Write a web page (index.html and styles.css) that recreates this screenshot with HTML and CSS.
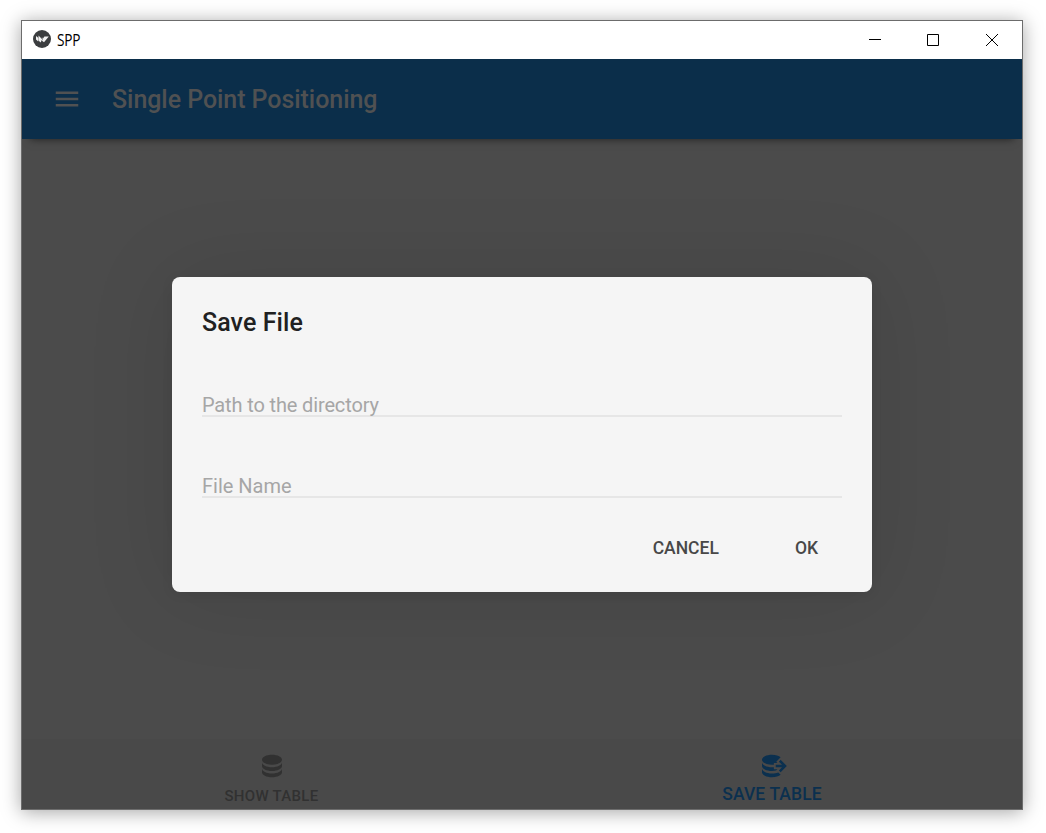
FILE: index.html
```html
<!DOCTYPE html>
<html lang="en">
<head>
<meta charset="utf-8">
<title>SPP</title>
<link rel="stylesheet" href="styles.css">
</head>
<body>
<div class="window">
  <header class="titlebar">
    <svg class="logo" viewBox="0 0 18 18"><circle cx="9" cy="9" r="9" fill="#3b3d3f"/><path d="M3 6L5.2 7.8V11.6L3 9.6ZM5.5 5.6L9.2 9.2L7.6 12.4L5.5 10.6ZM8.6 7L10 8.4L11.4 6.6H15.8L11 12.2L9 10.8L9.7 9Z" fill="#f2f2f2"/></svg>
    <span class="caption">SPP</span>
    <div class="controls">
      <svg viewBox="0 0 12 12"><path d="M0 5.5H12" /></svg>
      <svg viewBox="0 0 12 12"><path d="M.5 .5H11.5V11.5H.5Z"/></svg>
      <svg viewBox="0 0 12 12"><path d="M0 0L12 12M12 0L0 12"/></svg>
    </div>
  </header>
  <div class="toolbar">
    <svg class="icon" viewBox="0 0 24 24"><path d="M3,6H21V8H3V6M3,11H21V13H3V11M3,16H21V18H3V16Z"/></svg>
    <h1 class="heading">Single Point Positioning</h1>
  </div>
  <main class="content">
    <section class="dialog">
      <h2 class="dialog-title">Save File</h2>
      <div class="field path">Path to the directory</div>
      <div class="field">File Name</div>
      <div class="actions"><span class="cancel">CANCEL</span><span class="ok">OK</span></div>
    </section>
  </main>
  <nav class="tabs">
    <div class="tab">
      <svg class="icon" viewBox="0 0 24 24"><path d="M12,3C7.58,3 4,4.79 4,7C4,9.21 7.58,11 12,11C16.42,11 20,9.21 20,7C20,4.79 16.42,3 12,3M4,9V12C4,14.21 7.58,16 12,16C16.42,16 20,14.21 20,12V9C20,11.21 16.42,13 12,13C7.58,13 4,11.21 4,9M4,14V17C4,19.21 7.58,21 12,21C16.42,21 20,19.21 20,17V14C20,16.21 16.42,18 12,18C7.58,18 4,16.21 4,14Z"/></svg>
      <span class="label">SHOW TABLE</span>
    </div>
    <div class="tab active">
      <svg class="icon" viewBox="0 0 24 24"><path d="M12,3C7.58,3 4,4.79 4,7C4,9.21 7.58,11 12,11C12.5,11 13,10.97 13.5,10.92V9.5H16.39L15.39,8.5L18.9,5C17.5,3.8 14.94,3 12,3M18.92,7.08L17.5,8.5L20,11H15V13H20L17.5,15.5L18.92,16.92L23.84,12M4,9V12C4,14.21 7.58,16 12,16C13.17,16 14.26,15.85 15.25,15.63L16.38,14.5H13.5V12.92C13,12.97 12.5,13 12,13C7.58,13 4,11.21 4,9M4,14V17C4,19.21 7.58,21 12,21C14.94,21 17.5,20.2 18.9,19L17,17.1C15.61,17.66 13.9,18 12,18C7.58,18 4,16.21 4,14Z"/></svg>
      <span class="label">SAVE TABLE</span>
    </div>
  </nav>
</div>
</body>
</html>
```
FILE: styles.css
```css
* { box-sizing: border-box; margin: 0; }
body {
  padding: 20px 23px 23px 21px;
  height: 833px;
  background: #fff;
  font-family: Roboto, sans-serif;
  overflow: hidden;
}
svg { display: block; }
.window {
  display: flex;
  flex-direction: column;
  width: 1002px;
  height: 790px;
  border: 1px solid #6c6c6c;
  background: #4b4b4b;
  box-shadow: 0 2px 18px rgba(0, 0, 0, .36);
}
.titlebar {
  display: flex;
  align-items: center;
  height: 38px;
  padding: 0 24px 0 11px;
  background: #fff;
}
.logo { width: 18px; height: 18px; margin-top: -2px; }
.caption {
  margin: 0 0 0 6px;
  font: 15.5px/20px "Open Sans", sans-serif;
  letter-spacing: -.3px;
  transform: scaleX(.88);
  transform-origin: left;
  color: #000;
}
.controls { display: flex; gap: 46px; margin-left: auto; }
.controls svg { width: 12px; height: 12px; fill: none; stroke: #000; stroke-width: 1; }
.controls svg:nth-child(-n+2) { margin-left: -1px; margin-right: 1px; }
.controls svg:nth-child(2) { margin-left: 0; }
.controls svg:first-child { margin-right: 0; }
.toolbar {
  display: flex;
  align-items: center;
  height: 80px;
  padding-left: 30px;
  background: #0b2e4a;
  color: #505152;
  box-shadow: 0 8px 8px -8px rgba(0, 0, 0, .6);
}
.icon { width: 30px; height: 30px; fill: currentColor; }
.heading { margin-left: 30px; font-size: 25px; font-weight: 500; letter-spacing: -.06px; }
.content { flex: 1; padding: 137.5px 150px 0; }
.dialog {
  height: 315px;
  padding: 30px 30px 0;
  border-radius: 8px;
  background: #f5f5f5;
  box-shadow: 0 0 90px rgba(0, 0, 0, .1), 0 2px 12px rgba(0, 0, 0, .08);
}
.dialog-title { height: 30px; font-size: 25px; line-height: 32px; font-weight: 500; letter-spacing: .08px; color: #212121; }
.field {
  height: 26px;
  margin-top: 55px;
  border-bottom: 2px solid #e6e6e6;
  font-size: 20px;
  line-height: 28px;
  color: #a6a6a6;
}
.path { margin-top: 54px; letter-spacing: -.14px; }
.actions {
  display: flex;
  justify-content: flex-end;
  gap: 76px;
  margin-top: 39px;
  padding-right: 24px;
  font-size: 17.5px;
  line-height: 22px;
  font-weight: 500;
  color: #484848;
}
.tabs { display: flex; height: 70px; background: #494949; }
.tab {
  display: flex;
  flex: 1;
  flex-direction: column;
  align-items: center;
  padding-top: 12px;
  color: #313131;
}
.label { margin: 5px 1px 0 0; font-size: 15px; line-height: 20px; font-weight: 500; letter-spacing: .3px; }
.active { color: #0b304f; }
.active .label { margin: 3px 0 0; font-size: 17.5px; letter-spacing: .1px; }
```
